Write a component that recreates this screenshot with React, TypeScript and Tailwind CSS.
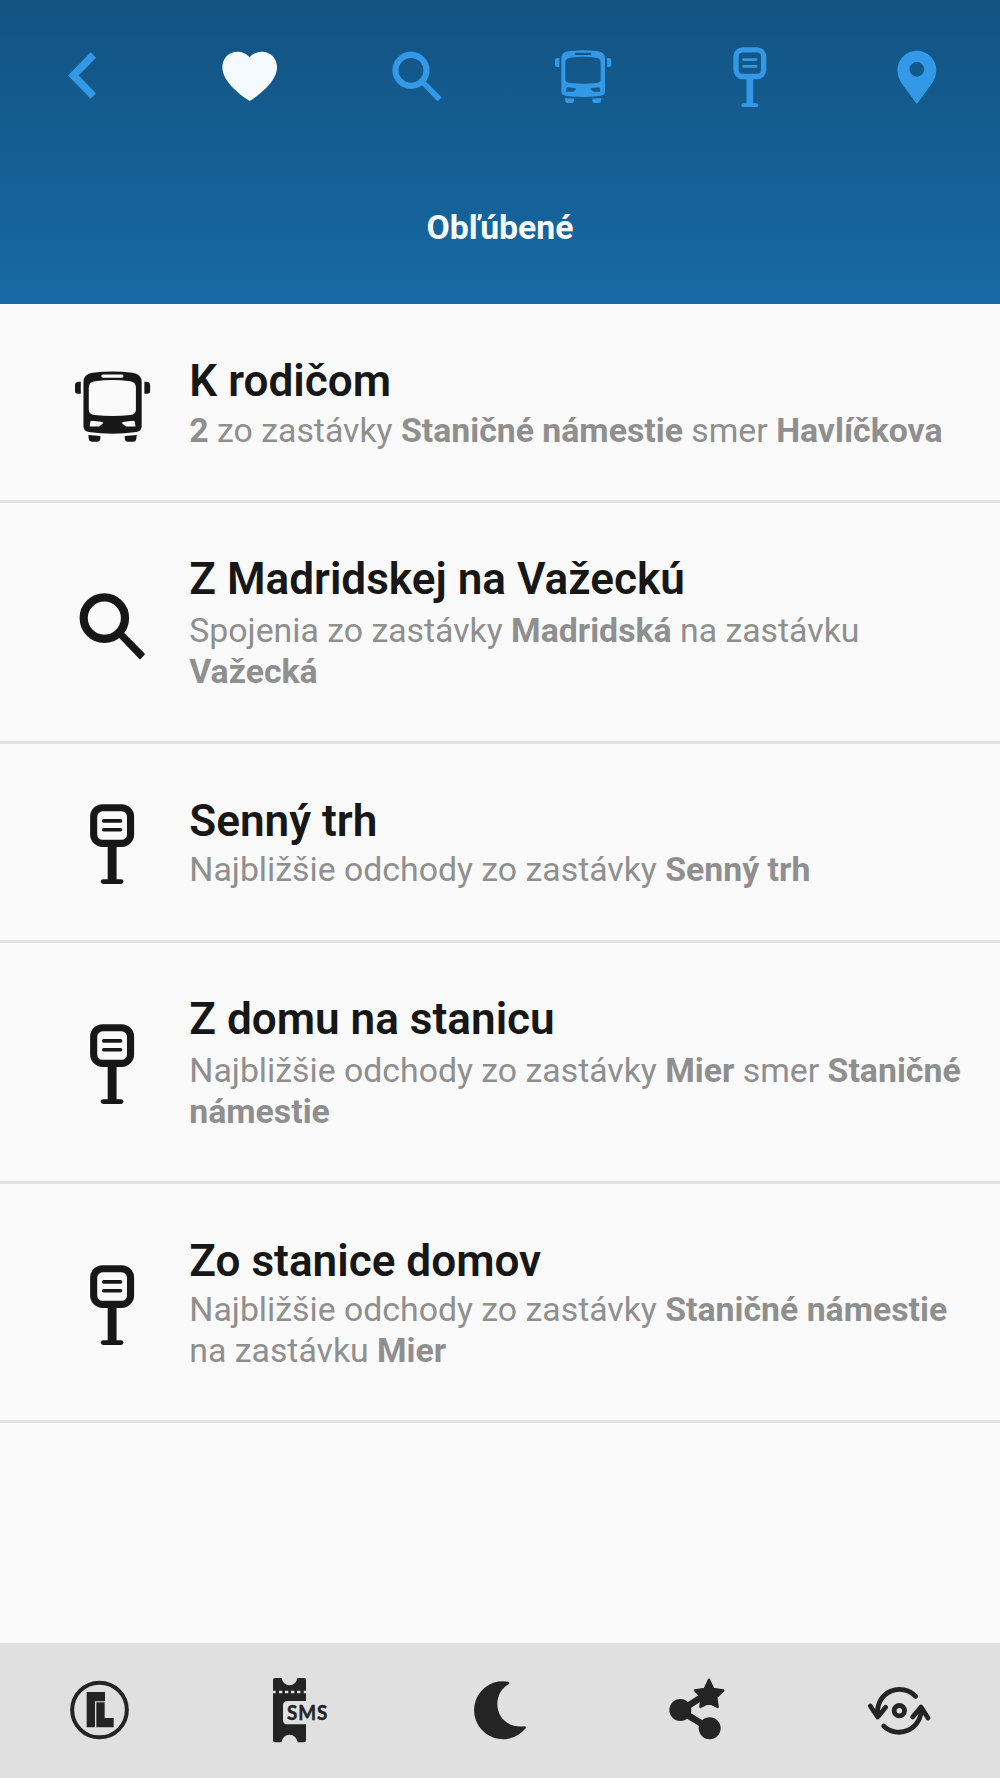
import type { ReactNode } from "react";

type IconProps = { className?: string };

const BackIcon = ({ className }: IconProps) => (
  <svg viewBox="0 0 240 240" className={className} fill="currentColor">
    <path d="M143 52L159 68L107 121.500L159 175L143 191L75 121.500Z" />
  </svg>
);

const HeartIcon = ({ className }: IconProps) => (
  <svg viewBox="0 0 240 240" className={className} fill="currentColor">
    <path d="M119 198C105 190 37 145 37 97C37 70 56 50 82 50C97 50 110 56 119 67C128 56 141 50 156 50C182 50 201 70 201 97C201 145 133 190 119 198Z" />
  </svg>
);

const SearchIcon = ({ className }: IconProps) => (
  <svg viewBox="0 0 240 240" className={className} fill="none" stroke="currentColor">
    <circle cx="102" cy="106" r="46.5" strokeWidth="18.5" />
    <path d="M136 147L143 140L190 187L182 195Z" fill="currentColor" strokeWidth="6" strokeLinejoin="round" />
  </svg>
);

const BusIcon = ({ className }: IconProps) => (
  <svg viewBox="0 0 240 240" className={className} fill="currentColor">
    <path d="M44 69H49V96H42Q36 96 36 90V77Q36 69 44 69Z" />
    <path d="M192 69H197Q205 69 205 77V90Q205 96 199 96H192Z" />
    <path
      fillRule="evenodd"
      d="M76 49Q120.500 43 165 49Q186 52 186 70V169Q186 180 174 182Q120.500 190 67 182Q55 180 55 169V70Q55 52 76 49ZM99 53Q95 53 95 56.500Q95 60 99 60H142Q145 60 145 56.500Q145 53 142 53ZM81 68Q67 70 67 82V132Q67 142 80 144Q120.500 149 161 144Q173 142 173 132V82Q173 70 160 68Q120.500 63 81 68ZM74 157Q70 157 70 162L69 170H90Q99 164 99 162Q99 159 94 159ZM167 157Q171 157 171 162L172 170H151Q142 164 142 162Q142 159 147 159Z"
    />
    <path d="M66 189L93 191V197Q93 204 86 204H75Q67 204 67 197Z" />
    <path d="M175 189L148 191V197Q148 204 155 204H166Q174 204 174 197Z" />
  </svg>
);

const StopIcon = ({ className }: IconProps) => (
  <svg viewBox="0 0 240 240" className={className} fill="currentColor">
    <rect x="78" y="44.500" width="83" height="80" rx="20" fill="none" stroke="currentColor" strokeWidth="16" />
    <rect x="96.500" y="70" width="46" height="8" rx="4" />
    <rect x="96.500" y="90" width="46" height="8" rx="4" />
    <rect x="109.500" y="130" width="20" height="78" />
    <rect x="94" y="205" width="51" height="11" rx="5.500" />
  </svg>
);

const PinIcon = ({ className }: IconProps) => (
  <svg viewBox="0 0 240 240" className={className} fill="currentColor">
    <path
      fillRule="evenodd"
      d="M119.500 207L71 141Q61 124 61 106A58.500 58.500 0 0 1 178 106Q178 124 168 141ZM119.500 81A22 22 0 1 0 119.500 125A22 22 0 1 0 119.500 81Z"
    />
  </svg>
);

const LogoIcon = ({ className }: IconProps) => (
  <svg viewBox="0 0 240 240" className={className} fill="currentColor">
    <circle cx="118.500" cy="120" r="82" fill="none" stroke="currentColor" strokeWidth="12" />
    <path d="M80 66H135V94H105V172H80Z" />
    <path d="M109 97H134V144H161V172H109Z" />
  </svg>
);

const SmsTicketIcon = ({ className }: IconProps) => (
  <svg viewBox="0 0 240 240" className={className} fill="currentColor">
    <path d="M45 24H65Q69 46 88.500 46Q108 46 112 24H132Q138 24 138 30V93H83Q69 93 69 107V149Q69 163 83 163H138V211Q138 217 132 217H113Q108 194 88.500 194Q69 194 64 217H45Q39 217 39 211V30Q39 24 45 24Z" />
    <path d="M39 66H47M57 66H67M75 66H85M93 66H103M111 66H121M131 66H139" stroke="#e0e0e0" strokeWidth="8" />
    <text
      x="81"
      y="149.500"
      textLength="124"
      lengthAdjust="spacingAndGlyphs"
      fontSize="60"
      fontWeight="700"
      letterSpacing="3"
      stroke="currentColor"
      strokeWidth="1.500"
      className="font-['Lato',sans-serif]"
    >
      SMS
    </text>
  </svg>
);

const MoonIcon = ({ className }: IconProps) => (
  <svg viewBox="0 0 240 240" className={className} fill="currentColor">
    <path d="M145 35A87 87 0 1 0 197 175Q199 168 192 169C145 174 112 143 112 102C112 76 126 53 147 42Q150 37 145 35Z" />
  </svg>
);

const ShareIcon = ({ className }: IconProps) => (
  <svg viewBox="0 0 240 240" className={className} fill="currentColor" stroke="currentColor">
    <circle cx="61" cy="120" r="33" stroke="none" />
    <circle cx="149" cy="175" r="33" stroke="none" />
    <path d="M140 72L61 122L149 176" fill="none" strokeWidth="20" />
    <path
      d="M147 29L160 57L190 61L169 82L173 111L147 98L121 111L125 82L105 61L134 57Z"
      strokeWidth="7"
      strokeLinejoin="round"
    />
  </svg>
);

const SwapIcon = ({ className }: IconProps) => (
  <svg
    viewBox="0 0 240 240"
    className={className}
    fill="none"
    stroke="currentColor"
    strokeWidth="14.5"
    strokeLinecap="round"
    strokeLinejoin="round"
  >
    <circle cx="118" cy="122" r="15.500" />
    <path d="M167 79A66 66 0 0 0 53 130" />
    <path d="M31 108L53 141L77 112" />
    <path d="M71 168A66 66 0 0 0 183 118" />
    <path d="M158 141L183 111L204 144" />
  </svg>
);

type Favourite = {
  title: string;
  Icon: (props: IconProps) => ReactNode;
  description: ReactNode;
  rowClass: string;
  iconClass: string;
  bodyClass: string;
  textClass: string;
};

const favourites: Favourite[] = [
  {
    title: "K rodičom",
    Icon: BusIcon,
    description: <><b>2</b> zo zastávky <b>Staničné námestie</b> smer <b>Havlíčkova</b></>,
    rowClass: "h-[199px]",
    iconClass: "pt-1",
    bodyClass: "pt-[51px]",
    textClass: "mt-[2.500px]",
  },
  {
    title: "Z Madridskej na Važeckú",
    Icon: SearchIcon,
    description: <>Spojenia zo zastávky <b>Madridská</b> na zastávku <b>Važecká</b></>,
    rowClass: "h-[241px]",
    iconClass: "pt-1",
    bodyClass: "pt-[49.500px]",
    textClass: "mt-[5px]",
  },
  {
    title: "Senný trh",
    Icon: StopIcon,
    description: <>Najbližšie odchody zo zastávky <b>Senný trh</b></>,
    rowClass: "h-[199px]",
    iconClass: "pb-0.5",
    bodyClass: "pt-[50.500px]",
    textClass: "mt-[2px]",
  },
  {
    title: "Z domu na stanicu",
    Icon: StopIcon,
    description: <>Najbližšie odchody zo zastávky <b>Mier</b> smer <b>Staničné námestie</b></>,
    rowClass: "h-[241px]",
    iconClass: "pb-0.5",
    bodyClass: "pt-[49.500px]",
    textClass: "mt-[5px]",
  },
  {
    title: "Zo stanice domov",
    Icon: StopIcon,
    description: <>Najbližšie odchody zo zastávky <b>Staničné námestie</b> na zastávku <b>Mier</b></>,
    rowClass: "h-[239px]",
    iconClass: "pt-px",
    bodyClass: "pt-[50.500px]",
    textClass: "mt-[2px]",
  },
];

const tabs = [
  { name: "back", Icon: BackIcon },
  { name: "favourites", Icon: HeartIcon },
  { name: "search", Icon: SearchIcon },
  { name: "lines", Icon: BusIcon },
  { name: "stops", Icon: StopIcon },
  { name: "map", Icon: PinIcon },
];

const tools = [
  { name: "operator", Icon: LogoIcon },
  { name: "sms", Icon: SmsTicketIcon },
  { name: "night", Icon: MoonIcon },
  { name: "share", Icon: ShareIcon },
  { name: "swap", Icon: SwapIcon },
];

const App: React.FC = () => {
  return (
    <div className="flex h-[1778px] w-[1000px] flex-col bg-[#fafafa] font-['Roboto',sans-serif]">
      <header className="flex h-[304px] shrink-0 flex-col bg-linear-to-b from-[#125382] to-[#1769a5]">
        <nav className="grid grid-cols-6 pt-[35px]">
          {tabs.map(({ name, Icon }) => (
            <button key={name} className={`flex justify-center ${name === "favourites" ? "text-[#f5faff]" : "text-[#3399e6]"}`}>
              <Icon className="size-20" />
            </button>
          ))}
        </nav>
        <h1 className="mt-[93px] text-center text-[33.800px] leading-10 font-bold text-[#f5faff]">Obľúbené</h1>
      </header>

      <main className="flex-1">
        {favourites.map(({ title, Icon, description, rowClass, iconClass, bodyClass, textClass }) => (
          <div key={title} className={`flex border-b-3 border-[#e2e2e2] ${rowClass}`}>
            <div className={`flex w-[189.300px] shrink-0 items-center pl-[58.500px] text-[#171717] ${iconClass}`}>
              <Icon className="size-[106.700px]" />
            </div>
            <div className={`flex-1 pr-6 ${bodyClass}`}>
              <h2 className="text-[44.100px] leading-[52px] font-semibold text-[#171717]">{title}</h2>
              <p className={`text-[33.800px] leading-[41px] text-[#8f8f8f] ${textClass}`}>{description}</p>
            </div>
          </div>
        ))}
      </main>

      <footer className="grid h-[135px] shrink-0 grid-cols-5 bg-[#e0e0e0] pt-[27px] text-[#242424]">
        {tools.map(({ name, Icon }) => (
          <button key={name} className="flex items-start justify-center">
            <Icon className="size-20" />
          </button>
        ))}
      </footer>
    </div>
  );
};

export default App;
